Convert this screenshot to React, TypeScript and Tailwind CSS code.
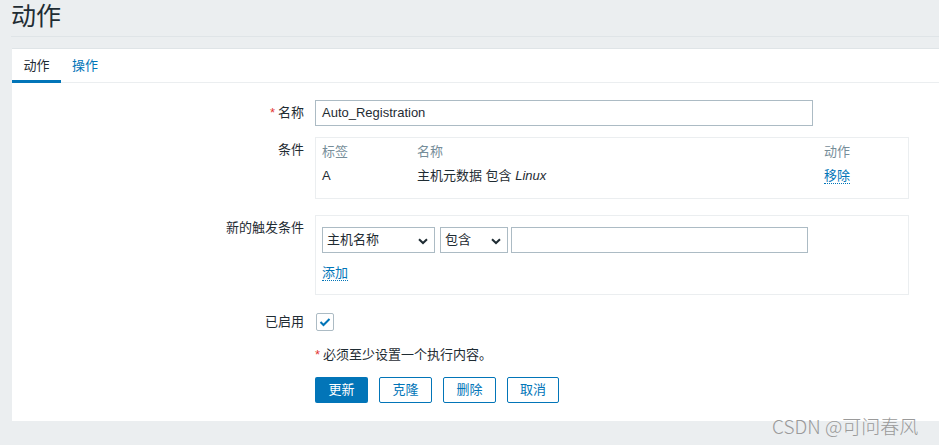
import React from 'react';

const font = { fontFamily: '"Liberation Sans", Arial, "Noto Sans CJK SC", sans-serif' };

const Chevron = () => (
  <svg width="10" height="7" viewBox="0 0 10 7" className="absolute right-[6px] top-[10px]">
    <path d="M1 1.2 L5 5 L9 1.2" fill="none" stroke="#1f2c33" strokeWidth="2" />
  </svg>
);

const Row = ({ label, required, children, className = '', labelClass = '' }: { label?: string; required?: boolean; children: React.ReactNode; className?: string; labelClass?: string }) => (
  <div className={`flex ${className}`}>
    <div className={`w-[292px] shrink-0 text-right ${labelClass}`}>
      {required && <span className="text-[#e33734] mr-[3px]">*</span>}
      {label}
    </div>
    <div className="ml-[11px] flex-1">{children}</div>
  </div>
);

export default function App() {
  return (
    <div className="relative w-[939px] h-[445px] bg-[#ebeef0] text-[#1f2c33] text-[13px] overflow-hidden" style={font}>
      <div className="ml-[11px] h-[37px] border-b border-[#dfe4e7]">
        <h1 className="text-[25px] leading-[32px] text-[#1f2c33]">动作</h1>
      </div>
      <div className="ml-[12px] mt-[11px] h-[373px] bg-white border-t border-[#dfe4e7]">
        <div className="flex h-[34px] border-b border-[#ebeef0]">
          <div className="relative w-[49px] text-center leading-[34px]">
            动作
            <div className="absolute left-0 right-0 bottom-[-1px] h-[3px] bg-[#0275b8]" />
          </div>
          <div className="ml-[11px] leading-[34px] text-[#0275b8]">操作</div>
        </div>

        <div className="pt-[17px]">
          <Row label="名称" required labelClass="leading-[26px]">
            <div className="w-[498px] h-[26px] border border-[#acbbc4] px-[6px] leading-[24px]">Auto_Registration</div>
          </Row>

          <Row label="条件" className="mt-[11px]" labelClass="pt-[3px]">
            <div className="w-[594px] h-[62px] border border-[#ebeef0] px-[6px] pt-[5px]">
              <div className="flex text-[#768d99] leading-[18px]">
                <div className="w-[95px]">标签</div>
                <div className="w-[407px]">名称</div>
                <div>动作</div>
              </div>
              <div className="flex leading-[18px] mt-[6px]">
                <div className="w-[95px]">A</div>
                <div className="w-[407px]">主机元数据 包含 <i>Linux</i></div>
                <div>
                  <span className="text-[#0275b8] border-b border-dotted border-[#0275b8]">移除</span>
                </div>
              </div>
            </div>
          </Row>

          <Row label="新的触发条件" className="mt-[16px]" labelClass="pt-[3px]">
            <div className="w-[594px] h-[80px] border border-[#ebeef0] px-[6px] pt-[11px]">
              <div className="flex">
                <div className="relative w-[113px] h-[26px] border border-[#acbbc4] px-[4px] leading-[24px]">
                  主机名称
                  <Chevron />
                </div>
                <div className="relative ml-[5px] w-[68px] h-[26px] border border-[#acbbc4] px-[4px] leading-[24px]">
                  包含
                  <Chevron />
                </div>
                <div className="ml-[3px] w-[297px] h-[26px] border border-[#acbbc4]" />
              </div>
              <div className="mt-[11px] leading-[18px]">
                <span className="text-[#0275b8] border-b border-dotted border-[#0275b8]">添加</span>
              </div>
            </div>
          </Row>

          <Row label="已启用" className="mt-[18px]" labelClass="leading-[18px]">
            <div className="ml-[1px] w-[18px] h-[18px] border border-[#acbbc4] rounded-[2px] flex items-center justify-center">
              <svg width="12" height="10" viewBox="0 0 12 10">
                <path d="M1.5 5 L4.5 8 L10.5 2" fill="none" stroke="#0275b8" strokeWidth="2" />
              </svg>
            </div>
          </Row>

          <Row className="mt-[15px]">
            <div className="leading-[18px]">
              <span className="text-[#e33734] mr-[3px]">*</span>必须至少设置一个执行内容。
            </div>
          </Row>

          <Row className="mt-[13px]">
            <div className="flex gap-[11px]">
              <button className="w-[53px] h-[26px] rounded-[2px] bg-[#0275b8] text-white">更新</button>
              <button className="w-[53px] h-[26px] rounded-[2px] border border-[#0275b8] text-[#0275b8] bg-white">克隆</button>
              <button className="w-[53px] h-[26px] rounded-[2px] border border-[#0275b8] text-[#0275b8] bg-white">删除</button>
              <button className="w-[52px] h-[26px] rounded-[2px] border border-[#0275b8] text-[#0275b8] bg-white">取消</button>
            </div>
          </Row>
        </div>
      </div>
      <div className="absolute left-[772px] top-[414px] text-[19px] leading-[24px] text-[#9a9a9a] font-light" style={{ fontFamily: '"Noto Sans CJK SC", sans-serif' }}>
        CSDN @可问春风
      </div>
    </div>
  );
}
